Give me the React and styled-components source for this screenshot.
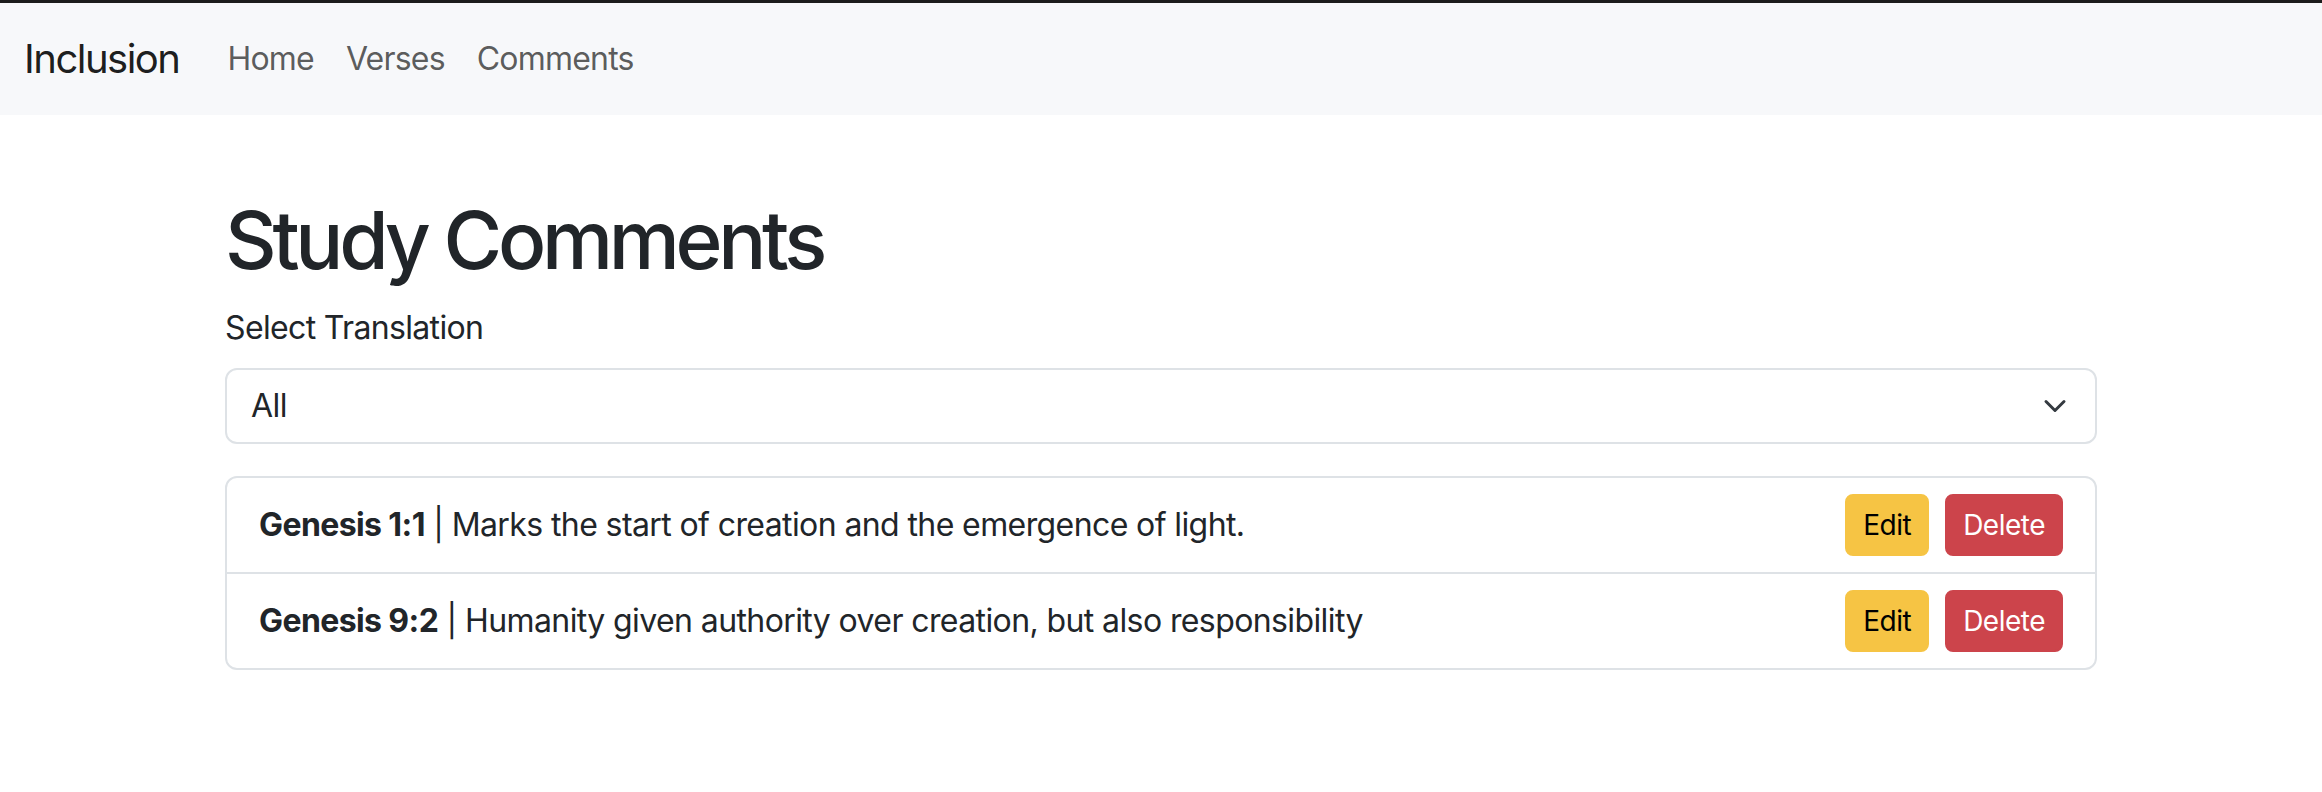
import React from 'react';
import styled, { createGlobalStyle } from 'styled-components';

const GlobalStyle = createGlobalStyle`
  * {
    box-sizing: border-box;
  }
  body {
    margin: 0;
    font-family: Inter, "Noto Sans", "Liberation Sans", sans-serif;
    font-size: 32px;
    line-height: 1.5;
    color: #212529;
    background: #fff;
  }
`;

const TopEdge = styled.div`
  height: 3px;
  background: #1c1c1c;
`;

const Navbar = styled.nav`
  display: flex;
  align-items: center;
  height: 112px;
  padding: 0 24px;
  background: #f7f8fa;
`;

const Brand = styled.a`
  font-size: 40px;
  line-height: 1.5;
  color: rgba(0, 0, 0, 0.9);
  text-decoration: none;
  margin-right: 32px;
  letter-spacing: -1.5px;
`;

const NavList = styled.div`
  display: flex;
`;

const NavLink = styled.a`
  padding: 16px;
  color: rgba(0, 0, 0, 0.65);
  text-decoration: none;
  font-size: 32px;
  letter-spacing: -0.8px;
`;

const Container = styled.main`
  width: 1920px;
  margin: 0 auto;
  padding: 77px 24px 0;
`;

const Title = styled.h1`
  margin: 0 0 16px;
  font-size: 80px;
  font-weight: 500;
  line-height: 1.2;
  letter-spacing: -4.3px;
`;

const Label = styled.label`
  display: block;
  margin-bottom: 16px;
  letter-spacing: -0.65px;
`;

const Select = styled.select`
  display: block;
  width: 100%;
  height: 76px;
  padding: 12px 72px 12px 24px;
  font: inherit;
  color: #212529;
  letter-spacing: -0.6px;
  appearance: none;
  background-color: #fff;
  background-image: url("data:image/svg+xml,%3csvg xmlns='http://www.w3.org/2000/svg' viewBox='0 0 16 16'%3e%3cpath fill='none' stroke='%23343a40' stroke-linecap='round' stroke-linejoin='round' stroke-width='2' d='m2 5 6 6 6-6'/%3e%3c/svg%3e");
  background-repeat: no-repeat;
  background-position: right 24px center;
  background-size: 32px 24px;
  border: 2px solid #dee2e6;
  border-radius: 12px;
  margin-bottom: 32px;
`;

const List = styled.ul`
  margin: 0;
  padding: 0;
  list-style: none;
  border: 2px solid #dee2e6;
  border-radius: 12px;
`;

const Item = styled.li`
  display: flex;
  align-items: center;
  justify-content: space-between;
  padding: 16px 32px;
  letter-spacing: -0.6px;
  & + & {
    border-top: 2px solid #dee2e6;
  }
`;

const Ref = styled.strong`
  font-weight: 700;
`;

const Actions = styled.div`
  display: flex;
  gap: 16px;
`;

const Button = styled.button`
  height: 62px;
  padding: 0 16px;
  font: inherit;
  font-size: 28px;
  letter-spacing: -0.5px;
  border: 2px solid ${p => p.$bg};
  border-radius: 8px;
  background: ${p => p.$bg};
  color: ${p => p.$fg};
  cursor: pointer;
`;

const comments = [
  { ref: 'Genesis 1:1', text: 'Marks the start of creation and the emergence of light.' },
  { ref: 'Genesis 9:2', text: 'Humanity given authority over creation, but also responsibility' },
];

const App = () => (
  <>
    <GlobalStyle />
    <TopEdge />
    <Navbar>
      <Brand href="#">Inclusion</Brand>
      <NavList>
        <NavLink href="#">Home</NavLink>
        <NavLink href="#">Verses</NavLink>
        <NavLink href="#">Comments</NavLink>
      </NavList>
    </Navbar>
    <Container>
      <Title>Study Comments</Title>
      <Label htmlFor="translation">Select Translation</Label>
      <Select id="translation" defaultValue="all">
        <option value="all">All</option>
      </Select>
      <List>
        {comments.map(c => (
          <Item key={c.ref}>
            <span>
              <Ref>{c.ref}</Ref> | {c.text}
            </span>
            <Actions>
              <Button $bg="#f6c444" $fg="#000">Edit</Button>
              <Button $bg="#cc444b" $fg="#fff">Delete</Button>
            </Actions>
          </Item>
        ))}
      </List>
    </Container>
  </>
);

export default App;
